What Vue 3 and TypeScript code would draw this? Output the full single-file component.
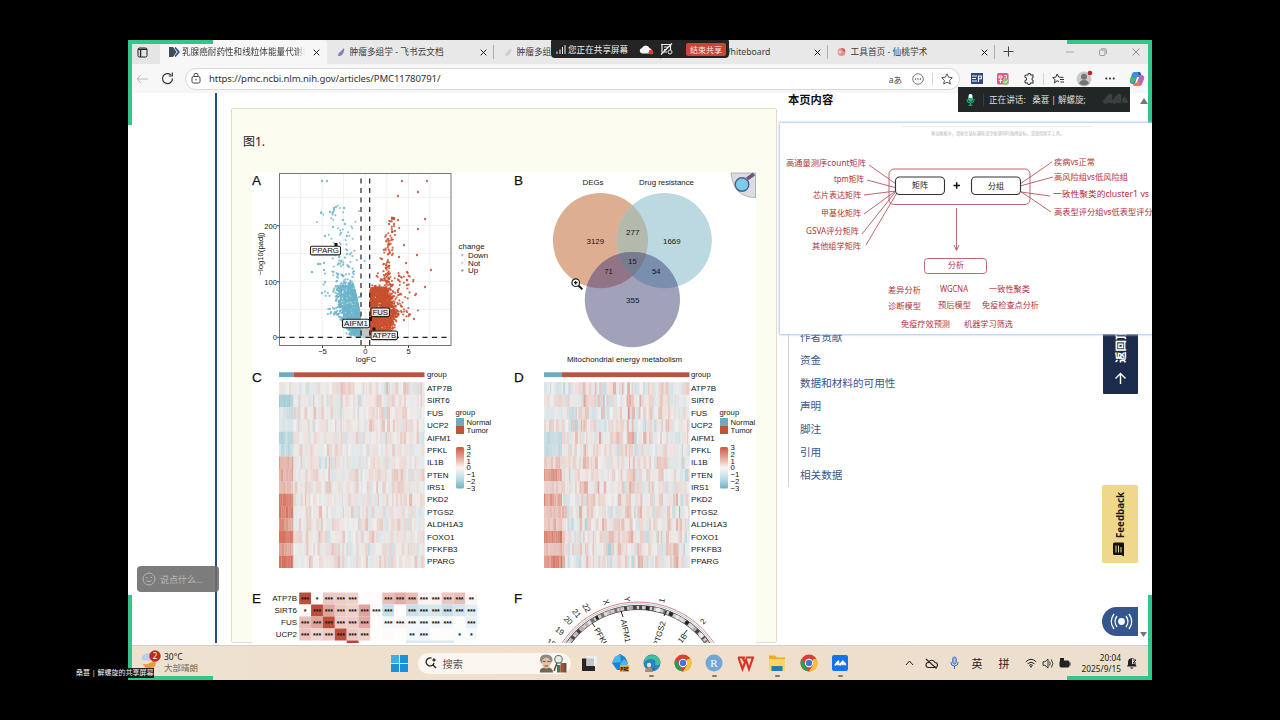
<template>
  <div class="stage">
    <div class="desktop">
      <!-- 标签栏 -->
      <div class="tabs">
        <div class="tab-menu">
          <svg width="11" height="11" viewBox="0 0 11 11"><rect x="1" y="1" width="9" height="9" rx="1.5" fill="none" stroke="#222" /><path d="M1 2.3h9M3.6 3v7" stroke="#222" stroke-width="1.3" /></svg>
        </div>
        <div v-for="(tab, i) in tabs" :key="i" class="tab" :class="{ active: tab.active, board: tab.kind === 'board' }">
          <svg class="tab-icon" width="12" height="12" viewBox="0 0 12 12">
            <template v-if="tab.kind === 'pmc'">
              <path d="M0 1h4l3.5 5L4 11H0z" fill="#454b55" />
              <path d="M6 1.5L9.8 6 6 10.5" fill="none" stroke="#274d86" stroke-width="1.7" />
            </template>
            <path v-else-if="tab.kind === 'doc'" d="M2 10C2 7 4 6 5 5l3-3c.5 2 0 5-2 7-1 1-3 1-4 1z" :fill="tab.faded ? '#cfcfd8' : '#8583bd'" />
            <template v-else-if="tab.kind === 'peach'">
              <circle cx="4.5" cy="6" r="3.9" fill="#e39089" />
              <path d="M4 2.5q4-1 4.400 3-1.500 1-4.400-3z" fill="#c9606a" />
              <circle cx="3" cy="6" r="1.7" fill="#f3c5bd" />
            </template>
          </svg>
          <span class="tab-title">{{ tab.title }}</span>
          <svg class="tab-close" width="7" height="7" viewBox="0 0 7 7"><path d="M.7.7l5.600 5.600M6.300.7L.7 6.300" stroke="#222" /></svg>
        </div>
        <svg class="new-tab" width="11" height="11" viewBox="0 0 11 11"><path d="M5.500.5v10M.5 5.500h10" stroke="#444" /></svg>
        <div class="win-controls">
          <svg width="8" height="8" viewBox="0 0 8 8"><path d="M0 4h8" stroke="#aaa" /></svg>
          <svg width="8" height="8" viewBox="0 0 8 8"><rect x=".5" y="2" width="5.500" height="5.500" rx="1" fill="none" stroke="#999" /><path d="M2 .8h4q1.300 0 1.300 1.300V6" fill="none" stroke="#999" /></svg>
          <svg width="8" height="8" viewBox="0 0 8 8"><path d="M.5.5l7 7M7.500.5l-7 7" stroke="#888" /></svg>
        </div>
      </div>

      <!-- 地址栏 -->
      <div class="toolbar">
        <svg width="12" height="10" viewBox="0 0 12 10"><path d="M12 5H1M5 1L1 5l4 4" fill="none" stroke="#bbb" /></svg>
        <svg class="reload" width="13" height="13" viewBox="0 0 13 13"><path d="M11.500 6.500A5 5 0 1 1 9.800 2.800" fill="none" stroke="#333" stroke-width="1.200" /><path d="M11.300.5v3.500H7.800" fill="none" stroke="#333" stroke-width="1.200" /></svg>
        <div class="address">
          <svg width="10" height="11" viewBox="0 0 10 11"><rect x="1" y="3.500" width="8" height="6.500" rx="1.500" fill="none" stroke="#444" /><path d="M3 3.500V2.300a2 2 0 0 1 4 0v1.200" fill="none" stroke="#444" /><circle cx="5" cy="6.800" r=".8" fill="#444" /></svg>
          <span class="url">https://pmc.ncbi.nlm.nih.gov/articles/PMC11780791/</span>
          <span class="translate">aあ</span>
          <svg width="12" height="12" viewBox="0 0 12 12"><circle cx="6" cy="6" r="5.300" fill="none" stroke="#555" stroke-width=".8" /><circle v-for="n in 3" :key="n" :cx="n * 2.400 + 1.200" cy="6" r=".7" fill="#444" /></svg>
          <i class="sep"></i>
          <svg width="12" height="12" viewBox="0 0 12 12"><path d="M6 .8l1.600 3.400 3.700.5-2.700 2.600.7 3.700L6 9.200 2.700 11l.7-3.700L.7 4.700l3.700-.5z" fill="none" stroke="#444" stroke-width=".9" /></svg>
        </div>
        <div class="extensions">
          <svg width="12" height="11" viewBox="0 0 12 11"><rect width="12" height="11" fill="#2c477b" /><path d="M1 3h5M1 5.500h4M1 8h5M7.500 9V3h2.800v2.800H7.500" fill="none" stroke="#fff" stroke-width="1.100" /></svg>
          <svg width="12" height="12" viewBox="0 0 12 12"><rect width="11.500" height="11.500" rx="1.500" fill="#df5a88" /><path d="M2 3h3v2H2zM7 2.500h2.500V5H7M2 7.500h3M3.500 6v4" fill="none" stroke="#fff" stroke-width=".9" /><circle cx="8.500" cy="8.500" r="3.200" fill="#8bc56a" /><path d="M7 8.500l1.200 1.200 2-2.200" fill="none" stroke="#fff" /></svg>
          <svg width="12" height="12" viewBox="0 0 12 12"><path d="M3 2h1.800a1.500 1.500 0 0 1 3 0H10v2.600a1.600 1.600 0 0 0 0 3V10H7.500a1.500 1.500 0 0 1-3 0H3q-1 0-1-1V7.500M2 4.500V3q0-1 1-1M2 4.300a1.600 1.600 0 0 1 0 3.200" fill="none" stroke="#333" stroke-width="1.100" /></svg>
          <i class="sep"></i>
          <svg width="13" height="12" viewBox="0 0 13 12"><path d="M7 8.500L5 7.800 2.500 10 3 6.800.8 4.500l3-.4L5.200 1l1.500 3.100 4.800.3M8 6.500h4M8.500 9h3.500" fill="none" stroke="#333" stroke-width="1" /></svg>
          <svg width="17" height="17" viewBox="0 0 17 17"><circle cx="8" cy="9" r="7.500" fill="#c9c9c9" /><circle cx="8" cy="6.800" r="3" fill="#747474" /><path d="M3 13.500Q4 10 8 10t5 3.500q-5 4-10 0z" fill="#747474" /><circle cx="14" cy="3" r="2.300" fill="#c0232c" /></svg>
          <svg width="10" height="3" viewBox="0 0 10 3"><circle v-for="n in 3" :key="n" :cx="n * 3.700 - 2.400" cy="1.500" r="1" fill="#222" /></svg>
          <svg width="16" height="16" viewBox="0 0 16 16"><path d="M5 1h5q2 0 2 3l-1 2H8L6 13H3q-3-1-2-4l2-6q.5-2 2-2z" fill="#3a8fdc" /><path d="M11 4h2q3 1 2 4l-2 5q-.7 2-3 2H6q-2 0-2-2l3-1q1 0 1.500-2z" fill="#bd62b8" /><path d="M1 8q1 5 4 3l2-4-5-1z" fill="#53b75c" /><path d="M4 13q4 0 5-3l2 1-1 4H6q-2 0-2-2z" fill="#ea7f43" /><path d="M9 1q3 0 3 3h-2z" fill="#2d47b5" /></svg>
        </div>
      </div>

      <!-- 页面内容 -->
      <div class="page">
        <div class="gutter"></div>
        <div class="article">
          <div class="figure-box">
            <div class="figure-title">图1.</div>
            <svg class="figure" width="504" height="471" viewBox="252 172 504 471">
              <rect x="252" y="172" width="504" height="471" fill="#fff" />
              <text v-for="l in panelLetters" :key="l.t" :x="l.x" :y="l.y" font-size="13.500" fill="#111" stroke="#111" stroke-width=".25">{{ l.t }}</text>

              <!-- A 火山图 -->
              <g stroke="#ebebeb" stroke-width=".8">
                <line v-for="n in 7" :key="'v' + n" :x1="278.800 + n * 21.600" :x2="278.800 + n * 21.600" y1="174" y2="345" />
                <line v-for="n in 6" :key="'h' + n" x1="280" x2="450" :y1="365.400 - n * 28" :y2="365.400 - n * 28" />
              </g>
              <circle v-for="(p, i) in volcano" :key="'p' + i" :cx="p.x" :cy="p.y" :r="p.r" :fill="p.c" fill-opacity=".85" />
              <path d="M361 345V174M369.700 345V174M280 337.300H451" fill="none" stroke="#222" stroke-width="1.200" stroke-dasharray="5 4.500" />
              <rect x="279.500" y="173.500" width="171.500" height="172" fill="none" stroke="#777" />
              <path d="M277 337.300h2.500M277 281.700h2.500M277 225.700h2.500M322.500 345.500v2.500M365.300 345.500v2.500M408.500 345.500v2.500" stroke="#444" />
              <g v-for="g in geneTags" :key="g.t">
                <rect :x="g.x" :y="g.y" :width="g.w" height="8.600" rx="1.500" fill="#fff" fill-opacity=".8" stroke="#222" stroke-width="1.100" />
                <text :x="g.x + g.w / 2" :y="g.y + 7.100" font-size="7.800" text-anchor="middle" :textLength="g.w - 3" lengthAdjust="spacingAndGlyphs">{{ g.t }}</text>
              </g>
              <path d="M334.500 243h3v3h-3zM369 317h3v4h-3zM372.500 327.500h3v3h-3z" fill="#111" />
              <g font-size="7.600" text-anchor="end">
                <text x="277" y="340.200">0</text>
                <text x="277" y="284.500">100</text>
                <text x="277" y="228.500">200</text>
              </g>
              <g font-size="7.600" text-anchor="middle">
                <text x="322.500" y="354">−5</text>
                <text x="365.300" y="354">0</text>
                <text x="408.500" y="354">5</text>
                <text x="366" y="361.500">logFC</text>
                <text transform="translate(262.500 254) rotate(-90)" textLength="43">−log10(padj)</text>
              </g>
              <text x="458.500" y="248.500" font-size="7.800" textLength="26">change</text>
              <g v-for="(k, i) in legendKeys" :key="k.t">
                <circle cx="462.300" :cy="255 + i * 7.700" r="1.200" :fill="k.c" />
                <text x="468" :y="257.800 + i * 7.700" font-size="7.900">{{ k.t }}</text>
              </g>

              <!-- B 韦恩图 -->
              <defs>
                <clipPath id="clip-a"><circle cx="600.500" cy="240.600" r="47.600" /></clipPath>
                <clipPath id="clip-b"><circle cx="664.300" cy="240.600" r="47.600" /></clipPath>
                <linearGradient id="scale-c" x2="0" y2="1">
                  <stop offset="0" stop-color="#cb5743" />
                  <stop offset=".25" stop-color="#e3a393" />
                  <stop offset=".5" stop-color="#faf5f3" />
                  <stop offset=".78" stop-color="#b7dbe3" />
                  <stop offset="1" stop-color="#6eb1c4" />
                </linearGradient>
              </defs>
              <circle cx="600.500" cy="240.600" r="47.600" fill="#deae91" />
              <circle cx="664.300" cy="240.600" r="47.600" fill="#bcd8e0" />
              <g clip-path="url(#clip-a)"><circle cx="664.300" cy="240.600" r="47.600" fill="#b3b9ab" /></g>
              <circle cx="632.400" cy="299.600" r="47.600" fill="#a1a1b9" />
              <g clip-path="url(#clip-a)"><circle cx="632.400" cy="299.600" r="47.600" fill="#937487" /></g>
              <g clip-path="url(#clip-b)">
                <circle cx="632.400" cy="299.600" r="47.600" fill="#7a8eae" />
                <g clip-path="url(#clip-a)"><path d="M632.400 252a47.600 47.600 0 0 1 16 2.600V300h-32v-45.400a47.600 47.600 0 0 1 16-2.600z" fill="#777c91" /></g>
              </g>
              <g font-size="7.800" text-anchor="middle">
                <text v-for="v in vennTexts" :key="v.t" :x="v.x" :y="v.y" :textLength="v.w" lengthAdjust="spacingAndGlyphs">{{ v.t }}</text>
              </g>
              <path d="M731 173h24.500v24.500q-22 0-24.500-24.500z" fill="#dcdde2" stroke="#999" stroke-width=".7" />
              <path d="M747 179l7-5" stroke="#6f5480" stroke-width="3.500" />
              <circle cx="742" cy="184.500" r="6.800" fill="#7ccdea" stroke="#4d5c93" stroke-width="1.400" />

              <!-- C / D 热图 -->
              <g v-for="h in heatmaps" :key="h.x">
                <rect :x="h.x" y="372.300" :width="h.normal" height="4.800" fill="#6bacc0" />
                <rect :x="h.x + h.normal" y="372.300" :width="145.500 - h.normal" height="4.800" fill="#bd533f" />
                <rect :x="h.x" y="382.300" width="145.500" height="185.700" fill="#ebe5e3" />
                <rect v-for="(c, i) in h.cells" :key="i" :x="c.x" :y="c.y" :width="c.w" height="12.400" :fill="c.c" />
                <text :x="h.label" y="377.300" font-size="7.700">group</text>
                <text v-for="(g, i) in genes" :key="g" :x="h.label" :y="391 + i * 12.380" font-size="8.100">{{ g }}</text>
                <text :x="h.label + 28.500" y="414.500" font-size="7.700">group</text>
                <rect :x="h.label + 29" y="418" width="8" height="8" fill="#6bacc0" />
                <rect :x="h.label + 29" y="426" width="8" height="8" fill="#bd533f" />
                <text :x="h.label + 39.500" y="424.500" font-size="7.700">Normal</text>
                <text :x="h.label + 39.500" y="432.500" font-size="7.700">Tumor</text>
                <rect :x="h.label + 29" y="447" width="8" height="41.500" rx="1.500" fill="url(#scale-c)" />
                <text v-for="n in 7" :key="n" :x="h.label + 39.500" :y="442.800 + n * 6.900" font-size="7.800">{{ 4 - n < 0 ? '−' + (n - 4) : 4 - n }}</text>
              </g>

              <!-- E 相关性矩阵 -->
              <g v-for="(row, r) in corr" :key="row.name">
                <rect v-for="(v, c) in row.vals" :key="c" :x="299.200 + c * 11.870" :y="592.500 + r * 12" width="11.900" height="12" :fill="corrColor(v)" />
                <text x="297" :y="601.200 + r * 12" font-size="8" text-anchor="end">{{ row.name }}</text>
                <text v-for="(s, c) in row.stars" :key="'s' + c" :x="305.200 + c * 11.870" :y="602 + r * 12" font-size="7" font-weight="bold" text-anchor="middle">{{ '*'.repeat(s) }}</text>
              </g>
              <rect x="346.700" y="640.500" width="11.900" height="3" fill="#b8432f" />
              <rect x="406" y="640.500" width="48" height="3" fill="#dbe9ee" />

              <!-- F 染色体圈图 -->
              <circle cx="638" cy="693" r="91" fill="none" stroke="#c96a6a" stroke-width=".8" />
              <circle cx="638" cy="693" r="89.300" fill="none" stroke="#999" stroke-width=".6" />
              <circle cx="638" cy="693" r="85.500" fill="none" stroke="#333" stroke-width="5" />
              <circle cx="638" cy="693" r="85.500" fill="none" stroke="#d3cfd1" stroke-width="3.600" />
              <path v-for="(b, i) in bands" :key="i" :d="b.d" fill="none" :stroke="b.c" stroke-width="3.800" />
              <path d="M592 623l3 4M621 611l2 6M664 616l2-5M684 634l3-4" stroke="#222" stroke-width="1" />
              <text v-for="l in ringLabels" :key="l.t" :transform="`translate(${l.x} ${l.y}) rotate(${l.a})`" font-size="7.900" text-anchor="middle" dominant-baseline="central">{{ l.t }}</text>
            </svg>
          </div>
        </div>
        <div class="aside">
          <div class="aside-title">本页内容</div>
          <div class="toc">
            <a v-for="t in toc" :key="t">{{ t }}</a>
          </div>
        </div>
        <svg class="scroll-up" width="8" height="6" viewBox="0 0 8 6"><path d="M4 0l4 6H0z" fill="#777" /></svg>
        <svg class="scroll-down" width="7" height="5" viewBox="0 0 7 5"><path d="M0 0h7L3.500 5z" fill="#777" /></svg>
        <svg class="to-top" width="35" height="80" viewBox="0 0 35 80">
          <rect width="35" height="80" rx="1" fill="#1b2b4b" />
          <text transform="translate(22 49) rotate(-90)" font-size="11.500" font-weight="bold" fill="#fff">返回顶部</text>
          <path d="M17.500 70V60M12.500 64.500l5-5 5 5" fill="none" stroke="#fff" stroke-width="1.400" />
        </svg>
        <svg class="feedback" width="36" height="78" viewBox="0 0 36 78">
          <rect width="36" height="78" rx="1.500" fill="#efd88b" />
          <text transform="translate(21.500 53) rotate(-90)" font-size="11" font-weight="bold" fill="#1b1b1b" textLength="46" lengthAdjust="spacingAndGlyphs">Feedback</text>
          <path d="M11 59q0-1.500 1.500-1.500H21q1 0 1 1v13l-2.500-1.500h-7Q11 70 11 68.500z" fill="#111" />
          <path d="M14 60.500v7M16.500 60.500v7M19 62v5.500" stroke="#efd88b" stroke-width="1" />
        </svg>
        <svg class="radio" width="36" height="29" viewBox="0 0 36 29">
          <path d="M36 0H14.500a14.500 14.500 0 0 0 0 29H36z" fill="#33568c" />
          <circle cx="19.500" cy="14.500" r="3.400" fill="#fff" />
          <path d="M15 9q-4 5.500 0 11M24 9q4 5.500 0 11M12 7q-5.500 7.500 0 15M27 7q5.500 7.500 0 15" fill="none" stroke="#fff" stroke-width="1.300" />
        </svg>
      </div>

      <!-- 任务栏 -->
      <div class="taskbar">
        <div class="weather">
          <svg width="20" height="20" viewBox="0 0 20 20">
            <path d="M1.500 14q7 1 11.500-4 4 4-1 8-6 3-10.500-4z" fill="#f29a38" />
            <path d="M2 10.500a3 3 0 0 1 1-5.500 4 4 0 0 1 7 0v5.500z" fill="#b9cdf2" />
            <circle cx="14" cy="6" r="5.700" fill="#bd2823" />
            <text x="14" y="9" font-size="8" fill="#fff" text-anchor="middle">2</text>
          </svg>
          <div class="weather-text">
            <span>30°C</span>
            <span class="muted">大部晴朗</span>
          </div>
        </div>
        <div class="apps">
          <svg class="start" width="17" height="17" viewBox="0 0 17 17"><path d="M0 0h8v8H0zM9 0h8v8H9zM0 9h8v8H0zM9 9h8v8H9z" fill="#1a8fdb" /><path d="M0 0h8v8H0z" fill="#35b0ea" /></svg>
          <div class="search">
            <svg width="12" height="12" viewBox="0 0 12 12"><path d="M6.500 1.200A4 4 0 1 0 9 6M8 8l3 3" fill="none" stroke="#222" stroke-width="1.300" /><path d="M9 .5l.7 1.800 1.800.7-1.800.7L9 5.500l-.7-1.800L6.500 3l1.800-.7z" fill="#222" /></svg>
            <span>搜索</span>
            <svg class="doodle" width="31" height="21" viewBox="0 0 31 21">
              <path d="M2 19.500q-1-4 4-5h5q4 1 4 5z" fill="#716556" />
              <path d="M2 8q-1-6.500 6-6.500T14.500 8L12 11H4z" fill="#8d8b86" />
              <ellipse cx="8.300" cy="10" rx="4.300" ry="5.500" fill="#e4bfa0" />
              <path d="M5 8.500h2.500M9.500 8.500H12M6.500 13h3.500" stroke="#5b4635" stroke-width=".9" />
              <path d="M19 10l-3 8" stroke="#5d4a30" stroke-width="1.500" />
              <path d="M19 12h3.500v7.500H19z" fill="#42785a" />
              <path d="M22.500 10H26v9.500h-3.500z" fill="#b4482f" />
              <path d="M26 10h2.500v9.500H26z" fill="#6c5135" />
              <circle cx="20.500" cy="6.300" r="3.800" fill="#e5efe8" stroke="#52756a" stroke-width="1.100" />
            </svg>
          </div>
          <div v-for="a in apps" :key="a.id" class="app" :class="{ running: a.running }">
            <svg width="18" height="18" viewBox="0 0 18 18">
              <template v-if="a.id === 'taskview'"><path d="M6 2h11v11H6z" fill="#eee" /><path d="M2 4.500h4.500V12H15v5H2z" fill="#262626" /><path d="M6.500 4.500H14V12H6.500z" fill="#c5c5c5" /></template>
              <template v-else-if="a.id === 'files-pre'"><path d="M9 0l5 3 3 6-4 7H6L1 9l3-6z" fill="#1e83cf" /><path d="M9 0l1 8-9 1 3-6zM13 5l4 4-4 7-4-6z" fill="#49b6ec" /><rect x="9" y="11" width="9" height="7" fill="#e6a93c" /><text x="13.500" y="16.500" font-size="4.500" font-weight="bold" text-anchor="middle">PRE</text></template>
              <template v-else-if="a.id === 'edge'"><circle cx="9" cy="9" r="8.500" fill="#2385ca" /><path d="M1 8a8.500 8.500 0 0 1 16.300-1Q18 12 12 11q2-6-4-6-5 0-7 4z" fill="#45bf9b" /><path d="M5 9q0 5 7 6-4 4-9 0z" fill="#145399" /><circle cx="6" cy="11" r="2.200" fill="#f0e0d2" /><path d="M2 18q0-5 4-5t4 5z" fill="#a28b80" /></template>
              <template v-else-if="a.id.startsWith('chrome')"><circle cx="9" cy="9" r="8.500" fill="#d9402f" /><path d="M1.600 4.800L9 17.500A8.500 8.500 0 0 1 1.600 4.800z" fill="#2f9c50" /><path d="M9 17.500l4-6.500V5h3.600A8.500 8.500 0 0 1 9 17.500z" fill="#f5c33b" /><circle cx="9" cy="9" r="4.200" fill="#fff" /><circle cx="9" cy="9" r="3.200" fill="#3b78dc" /></template>
              <template v-else-if="a.id === 'rstudio'"><circle cx="9" cy="9" r="8.500" fill="#72a5d8" /><text x="9" y="13" font-size="11" class="serif" fill="#fff" text-anchor="middle">R</text></template>
              <path v-else-if="a.id === 'wps'" d="M1 3.500h7M1.500 3.500L5.500 15 9 6l3 9 4-11.500M9 3.500h8M5.500 3.500l2 4" fill="none" stroke="#da3429" stroke-width="2.200" />
              <template v-else-if="a.id === 'folder'"><path d="M1 1.500h6l2 2h8V16H1z" fill="#e7ab28" /><path d="M1 5h16v12H1z" fill="#fbd562" /><path d="M3.500 12h11v5h-11z" fill="#2979b9" /></template>
              <template v-else><rect x="1" y="1" width="16" height="16" rx="2" fill="#1573ec" /><path d="M4 11.300l3.300-4v4M8.500 11.300l3.300-4v4M13 8.500q1.300 1 1.300 2.800" fill="none" stroke="#fff" stroke-width="2" stroke-linejoin="round" /></template>
            </svg>
          </div>
        </div>
        <div class="tray">
          <svg width="9" height="6" viewBox="0 0 9 6"><path d="M1 5l3.500-4L8 5" fill="none" stroke="#222" /></svg>
          <svg width="13" height="11" viewBox="0 0 13 11"><path d="M3.500 9.500a2.500 2.500 0 0 1 0-5 3.500 3.500 0 0 1 6.500 0 2.500 2.500 0 0 1 0 5zM1 1l10.500 9.500" fill="none" stroke="#222" stroke-width="1.100" /></svg>
          <svg width="9" height="14" viewBox="0 0 9 14"><rect x="2.700" y="1" width="3.600" height="7" rx="1.800" fill="#9db9e6" stroke="#3967b3" stroke-width=".9" /><path d="M.8 6q0 4 3.700 4t3.700-4M4.500 10v3" fill="none" stroke="#3967b3" /></svg>
          <span>英</span>
          <span>拼</span>
          <svg width="12" height="10" viewBox="0 0 12 10"><path d="M.8 3.800q5.200-5 10.400 0M2.600 5.700q3.400-3 6.800 0M4.200 7.400q1.800-1.500 3.600 0" fill="none" stroke="#222" /><circle cx="6" cy="8.700" r=".9" fill="#222" /></svg>
          <svg width="12" height="11" viewBox="0 0 12 11"><path d="M1 3.800h2L6 1v9L3 7.300H1zM7.500 3.500q1.500 2 0 4M9.300 1.500q3 4 0 8" fill="none" stroke="#222" stroke-width=".9" /></svg>
          <svg width="12" height="11" viewBox="0 0 12 11"><rect x="1" y="3" width="9" height="6" rx="1" fill="#222" stroke="#222" /><path d="M10.500 4.500h1v3h-1zM1 0h4v5H1z" fill="#222" /></svg>
          <div class="clock"><span>20:04</span><span>2025/9/15</span></div>
          <svg width="12" height="13" viewBox="0 0 12 13"><path d="M1 9.500l1-2V5a3.800 3.800 0 0 1 7.600 0v2.500l1 2zM4 10.500h3.600q-1.800 2.500-3.600 0z" fill="#222" /><path d="M6 2h5v5H6z" fill="#eddfce" /><path d="M7 3h3L7 6h3" fill="none" stroke="#222" /></svg>
        </div>
      </div>

      <i class="corner tl"></i>
      <i class="corner tr"></i>
      <i class="corner bl"></i>
      <i class="corner br"></i>
    </div>

    <!-- 会议浮层 -->
    <div class="share-bar">
      <svg width="10" height="9" viewBox="0 0 10 9"><path d="M1 9V6.500M4 9V4.500M6.500 9V2M9 9V0" stroke="#eee" /></svg>
      <span>您正在共享屏幕</span>
      <svg class="cloud" width="15" height="11" viewBox="0 0 15 11"><path d="M3 9.500a2.800 2.800 0 0 1 0-5.500 4 4 0 0 1 7.500 0 2.800 2.800 0 0 1 0 5.500z" fill="#f4f4f4" /><circle cx="12" cy="8.200" r="2.400" fill="#dd4033" /></svg>
      <svg width="13" height="12" viewBox="0 0 13 12"><path d="M1 1.500h10M2 1v8h5M4 4h5M4 6.500h3M1 11.500L12 .5M10.500 2v5" fill="none" stroke="#eee" stroke-width="1.200" /><circle cx="10" cy="9" r="2" fill="none" stroke="#eee" /></svg>
      <b>结束共享</b>
    </div>

    <div class="speaking">
      <svg width="9" height="12" viewBox="0 0 9 12"><rect x="2.500" y="0" width="4" height="7.500" rx="2" fill="#fff" /><path d="M2.500 4h4v1.500a2 2 0 0 1-4 0z" fill="#25b67c" /><path d="M.8 5q0 4 3.700 4t3.700-4M4.500 9v2M2.500 11.300h4" fill="none" stroke="#2fb983" /></svg>
      <i></i>
      <span>正在讲话:</span>
      <span>桑葚 | 解螺旋;</span>
      <svg class="wm" width="27" height="17" viewBox="0 0 27 17"><path d="M3 12l6-7v7M12 12l6-7v7M22 7q2.500 2 2.500 5" fill="none" stroke="#3c4040" stroke-width="4.500" stroke-linejoin="round" /></svg>
    </div>

    <div class="board">
      <svg width="372" height="211" viewBox="780 123 372 211">
        <path d="M902 126.500H1093" stroke="#eee" />
        <text x="931" y="135" font-size="4.800" fill="#b5b5b5" textLength="133" lengthAdjust="spacingAndGlyphs">移动画板中，请按住鼠标滚轮或空格键同时拖拽鼠标，或使用抓手工具。</text>
        <g fill="none" stroke="#b6575c" stroke-width=".9">
          <path d="M869 165L896 184M867 180l28 7.500M864 195l32-4M864 214l33-24M862 234l35-44M866 245l32-54" />
          <path d="M1052 162l-32 22M1053 177l-33 9M1050 196l-29-4M1051 212l-31-21" />
          <rect x="889" y="169" width="141" height="35.500" rx="5" />
          <rect x="924.500" y="258.500" width="62" height="15" rx="3" />
          <path d="M956.500 208v42M954 245l2.500 5.500 2.500-5.500" />
        </g>
        <g fill="#fff" stroke="#333" stroke-width="1.100">
          <rect x="895.500" y="177" width="49" height="17.500" rx="4" />
          <rect x="971.500" y="177" width="49" height="17.500" rx="4" />
        </g>
        <path d="M953.500 185.500h6.500M956.700 182.200v6.600" stroke="#111" stroke-width="1.500" />
        <text v-for="b in boardTexts" :key="b.t" :x="b.x" :y="b.y + 2.900" :fill="b.dark ? '#222' : '#b3303a'" :textLength="b.w" lengthAdjust="spacingAndGlyphs" font-size="8">{{ b.t }}</text>
      </svg>
    </div>

    <div class="say">
      <svg width="14" height="14" viewBox="0 0 14 14"><circle cx="7" cy="7" r="6" fill="none" stroke="#b5b5b5" /><path d="M4 5.500h1.500M8.500 5.500H10M4.500 8.500q2.500 2.500 5 0" fill="none" stroke="#b5b5b5" /></svg>
      <span>说点什么...</span>
    </div>
    <div class="caption">桑葚 | 解螺旋的共享屏幕</div>

    <svg class="cursor" width="12" height="12" viewBox="0 0 12 12"><circle cx="4.700" cy="4.700" r="3.800" fill="#fff" stroke="#222" stroke-width="1.200" /><path d="M7.500 7.500l3.800 3.800" stroke="#111" stroke-width="1.900" /><path d="M3 4.700h3.400M4.700 3v3.400" stroke="#111" stroke-width="1.200" /></svg>
  </div>
</template>

<script setup lang="ts">
interface Dot { x: number; y: number; r: number; c: string }
interface Cell { x: number; y: number; w: number; c: string }
interface Label { t: string; x: number; y: number; w?: number; a?: number; dark?: boolean }

const tabs = [
  { title: '乳腺癌耐药性和线粒体能量代谢相', kind: 'pmc', active: true },
  { title: '肿瘤多组学 - 飞书云文档', kind: 'doc' },
  { title: '肿瘤多组', kind: 'doc', faded: true },
  { title: 'Whiteboard', kind: 'board' },
  { title: '工具首页 - 仙桃学术', kind: 'peach' }
]

const toc = ['作者贡献', '资金', '数据和材料的可用性', '声明', '脚注', '引用', '相关数据']

const apps = [
  { id: 'taskview' },
  { id: 'files-pre' },
  { id: 'edge', running: true },
  { id: 'chrome-1' },
  { id: 'rstudio', running: true },
  { id: 'wps' },
  { id: 'folder', running: true },
  { id: 'chrome-2' },
  { id: 'meeting', running: true }
]

const panelLetters: Label[] = [
  { t: 'A', x: 252, y: 184.5 },
  { t: 'B', x: 514, y: 184.5 },
  { t: 'C', x: 252, y: 381.5 },
  { t: 'D', x: 514, y: 381.5 },
  { t: 'E', x: 252, y: 603 },
  { t: 'F', x: 514, y: 603 }
]

const geneTags = [
  { t: 'PPARG', x: 310.5, y: 246.3, w: 30 },
  { t: 'FUS', x: 371, y: 308, w: 18.5 },
  { t: 'AIFM1', x: 342.5, y: 319.2, w: 27 },
  { t: 'ATP7B', x: 371, y: 331, w: 26.5 }
]

const legendKeys = [
  { t: 'Down', c: '#a9c3cc' },
  { t: 'Not', c: '#d5d5d5' },
  { t: 'Up', c: '#c08878' }
]

const vennTexts: Label[] = [
  { t: 'DEGs', x: 593, y: 184.5, w: 21 },
  { t: 'Drug resistance', x: 666.5, y: 184.5, w: 55 },
  { t: '3129', x: 595.3, y: 244, w: 17.5 },
  { t: '277', x: 632.8, y: 235.3, w: 13.5 },
  { t: '1669', x: 671.8, y: 244, w: 17.5 },
  { t: '15', x: 632.5, y: 264, w: 8.5 },
  { t: '71', x: 608.5, y: 273.5, w: 8.5 },
  { t: '54', x: 656.3, y: 273.5, w: 8.5 },
  { t: '355', x: 632.8, y: 303, w: 13.5 },
  { t: 'Mitochondrial energy metabolism', x: 624.6, y: 362.3, w: 115 }
]

const boardTexts: Label[] = [
  { t: '高通量测序count矩阵', x: 786, y: 163, w: 80 },
  { t: 'tpm矩阵', x: 834, y: 179, w: 30 },
  { t: '芯片表达矩阵', x: 813, y: 195, w: 48 },
  { t: '甲基化矩阵', x: 821, y: 213, w: 40 },
  { t: 'GSVA评分矩阵', x: 806, y: 231, w: 53 },
  { t: '其他组学矩阵', x: 812, y: 246, w: 49 },
  { t: '矩阵', x: 912, y: 185.5, w: 16, dark: true },
  { t: '分组', x: 988, y: 186, w: 16, dark: true },
  { t: '疾病vs正常', x: 1054, y: 162.5, w: 41 },
  { t: '高风险组vs低风险组', x: 1054, y: 177, w: 74 },
  { t: '一致性聚类的cluster1 vs', x: 1053, y: 194, w: 96 },
  { t: '高表型评分组vs低表型评分组', x: 1054, y: 212, w: 107 },
  { t: '分析', x: 948, y: 265.5, w: 16 },
  { t: '差异分析', x: 888, y: 290, w: 33 },
  { t: 'WGCNA', x: 940, y: 289.5, w: 28 },
  { t: '一致性聚类', x: 989, y: 289, w: 41 },
  { t: '诊断模型', x: 888, y: 306, w: 33 },
  { t: '预后模型', x: 938, y: 305, w: 33 },
  { t: '免疫检查点分析', x: 982, y: 305, w: 57 },
  { t: '免疫疗效预测', x: 901, y: 324, w: 49 },
  { t: '机器学习筛选', x: 964, y: 324, w: 49 }
]

// 固定种子的随机数
const seeded = (seed: number) => () => {
  seed = (seed + 0x6d2b79f5) | 0
  let t = Math.imul(seed ^ (seed >>> 15), 1 | seed)
  t = (t + Math.imul(t ^ (t >>> 7), 61 | t)) ^ t
  return ((t ^ (t >>> 14)) >>> 0) / 4294967296
}

const gauss = (rnd: () => number) => rnd() + rnd() + rnd() + rnd() - 2

// 火山图散点
const buildVolcano = (): Dot[] => {
  const rnd = seeded(21)
  const blue = '#6db4ca'
  const red = '#c9502f'
  const dots: Dot[] = []
  for (let i = 0; i < 90; i++) {
    dots.push({ x: 361.5 + rnd() * 8, y: 337 - rnd() * 9, r: 1.1, c: '#c4c4c4' })
  }
  for (let i = 0; i < 950; i++) {
    const h = Math.pow(rnd(), 1.3) * 48 + Math.abs(gauss(rnd)) * 8
    const width = Math.min(19, 8 + h * 0.6) + gauss(rnd) * 4
    const right = 361 - Math.pow(h / 50, 2) * 7
    dots.push({ x: right - Math.pow(rnd(), 1.4) * width, y: 337 - h, r: 1.1, c: blue })
  }
  for (let i = 0; i < 150; i++) {
    const h = 22 + Math.pow(rnd(), 1.3) * 65
    dots.push({ x: 343 + gauss(rnd) * 13, y: 337 - h, r: 1.1, c: blue })
  }
  for (let i = 0; i < 35; i++) {
    dots.push({ x: 340 + gauss(rnd) * 16, y: 265 - rnd() * 60, r: 1, c: blue })
  }
  for (let i = 0; i < 1400; i++) {
    const h = Math.pow(rnd(), 0.95) * 48 + Math.abs(gauss(rnd)) * 3
    const width = 18 + Math.sin((h / 50) * Math.PI) * 8 - h * 0.06 + gauss(rnd) * 3
    dots.push({ x: 370.5 + Math.pow(rnd(), 1.2) * width, y: 337 - h, r: 1.1, c: red })
  }
  for (let i = 0; i < 110; i++) {
    const h = 45 + Math.pow(rnd(), 1.2) * 75
    dots.push({ x: 380 + h * 0.11 + gauss(rnd) * 5, y: 337 - h, r: 1.1, c: red })
  }
  for (let i = 0; i < 140; i++) {
    const h = 20 + Math.pow(rnd(), 1.2) * 44
    dots.push({ x: 396 + gauss(rnd) * 14, y: 337 - h, r: 1.1, c: red })
  }
  const farBlue = [[322, 181], [327, 181], [321, 213], [330, 212], [334, 208], [336, 207], [344, 208], [343, 220], [333, 227], [345, 224], [347, 236], [325, 236], [341, 233], [347, 254], [320, 264], [312, 272], [318, 264], [324, 263], [324, 270], [325, 282], [322, 293], [330, 309], [333, 212], [334, 210]]
  const farRed = [[402, 181], [427, 181], [418, 192], [398, 196], [425, 219], [418, 229], [392, 219], [394, 219], [398, 220], [389, 224], [394, 224], [392, 232], [395, 231], [404, 245], [417, 255], [431, 270], [406, 263], [399, 257], [407, 272], [407, 280], [407, 285], [425, 287], [416, 294], [414, 319], [399, 276], [382, 259], [404, 320]]
  farBlue.forEach(([x, y]) => dots.push({ x, y, r: 1.2, c: blue }))
  farRed.forEach(([x, y]) => dots.push({ x, y, r: 1.2, c: red }))
  return dots
}

const mix = (a: number[], b: number[], t: number) =>
  `rgb(${a.map((v, i) => Math.round(v + (b[i] - v) * t)).join(',')})`

const heatColor = (v: number) => {
  const t = Math.min(1, Math.abs(v))
  return v > 0 ? mix([240, 234, 232], [211, 100, 78], t) : mix([240, 239, 239], [112, 180, 198], t)
}

const genes = ['ATP7B', 'SIRT6', 'FUS', 'UCP2', 'AIFM1', 'PFKL', 'IL1B', 'PTEN', 'IRS1', 'PKD2', 'PTGS2', 'ALDH1A3', 'FOXO1', 'PFKFB3', 'PPARG']

// 相邻几行共用列趋势，每个格子宽度不等
const buildHeat = (x0: number, normal: number, base: number[], noise: number, seed: number): Cell[] => {
  const rnd = seeded(seed)
  const cells: Cell[] = []
  const trends = [0, 1, 2].map(() => Array.from({ length: 150 }, () => gauss(rnd) * noise))
  base.forEach((b, r) => {
    const trend = trends[Math.floor(r / 5)]
    let x = 0
    while (x < 145.5) {
      const limit = x < normal ? normal : 145.5
      const w = Math.min(limit - x, 0.9 + rnd() * 2.6)
      const v = x < normal
        ? b + gauss(rnd) * 0.16
        : 0.03 + trend[Math.floor(x)] + gauss(rnd) * noise * 0.8
      cells.push({ x: x0 + x, y: 382.3 + r * 12.38, w, c: heatColor(v) })
      x += Math.max(w, 0.1)
    }
  })
  return cells
}

const baseC = [-0.12, -0.5, -0.3, -0.15, -0.45, -0.35, 0.4, 0.45, 0.3, 0.75, 0.8, 0.7, 0.85, 0.55, 0.9]
const baseD = [-0.12, 0.05, -0.1, 0.05, -0.4, -0.3, 0.2, 0.6, 0.25, 0.5, 0.25, 0.3, 0.75, 0.3, 0.75]

const heatmaps = [
  { x: 279, label: 427, normal: 14.5, cells: buildHeat(279, 14.5, baseC, 0.19, 5) },
  { x: 544, label: 691, normal: 18, cells: buildHeat(544, 18, baseD, 0.28, 77) }
]

const volcano = buildVolcano()

const corr = [
  { name: 'ATP7B', vals: [1, 0, .3, .28, .25, 0, 0, .35, .45, .35, .05, .06, .3, .35, .04], stars: [3, 1, 3, 3, 3, 0, 0, 3, 3, 3, 3, 3, 3, 3, 2] },
  { name: 'SIRT6', vals: [0, 1, .5, .3, .25, .5, .02, -.4, 0, -.38, -.3, -.3, -.4, -.3, -.2], stars: [1, 3, 3, 3, 3, 3, 3, 3, 0, 3, 3, 3, 3, 3, 3] },
  { name: 'FUS', vals: [.35, .5, 1, .28, .28, .48, 0, -.05, .04, -.06, -.05, -.06, -.05, 0, -.15], stars: [3, 3, 3, 3, 3, 3, 0, 3, 3, 3, 3, 3, 3, 0, 3] },
  { name: 'UCP2', vals: [.32, .22, .28, 1, .3, .25, 0, .01, 0, -.05, -.08, 0, 0, -.02, -.04], stars: [3, 3, 3, 3, 3, 3, 0, 0, 0, 2, 3, 0, 0, 1, 1] }
]

const corrColor = (v: number) =>
  v >= 0 ? mix([255, 252, 251], [190, 78, 60], v) : mix([250, 252, 253], [125, 178, 200], -v)

// 圈图条带
const arc = (a1: number, a2: number) => {
  const p = (a: number) => {
    const rad = (a * Math.PI) / 180
    return `${638 + 85.5 * Math.sin(rad)} ${693 - 85.5 * Math.cos(rad)}`
  }
  return `M${p(a1)}A85.5 85.5 0 0 1 ${p(a2)}`
}

const bands = (() => {
  const rnd = seeded(9)
  const colors = ['#222', '#777', '#ddd', '#b9a3ae', '#444', '#eee', '#c9a7a7']
  const out: { d: string; c: string }[] = []
  let a = -58
  while (a < 60) {
    const w = 0.8 + rnd() * 2
    out.push({ d: arc(a, a + w), c: colors[Math.floor(rnd() * colors.length)] })
    a += w + rnd() * 2.5
  }
  return out
})()

const ringLabels: Label[] = [
  { t: '18', x: 551, y: 643, a: 30 },
  { t: '19', x: 559.5, y: 631, a: 38 },
  { t: '20', x: 568, y: 620.5, a: 45 },
  { t: '21', x: 576.5, y: 613.5, a: 52 },
  { t: '22', x: 586.5, y: 608, a: 59 },
  { t: 'X', x: 606, y: 602, a: 70 },
  { t: 'Y', x: 627, y: 599, a: 84 },
  { t: '1', x: 662, y: 600.5, a: -76 },
  { t: '2', x: 703, y: 621.5, a: -48 },
  { t: 'PFKL', x: 601, y: 637, a: 60 },
  { t: 'AIFM1', x: 625.5, y: 631, a: 79 },
  { t: 'PTGS2', x: 659.5, y: 634, a: -73 },
  { t: 'IL1B', x: 680.5, y: 641, a: -52 }
]
</script>

<style>
body {
  background: #000;
  overflow: hidden;
}
</style>

<style scoped>
.stage {
  position: relative;
  box-sizing: border-box;
  width: 1280px;
  height: 720px;
  padding: 40px 128px;
  background: #000;
  font-family: 'Noto Sans', 'Noto Sans CJK SC', sans-serif;
  overflow: hidden;
}

svg {
  display: block;
  flex: none;
}

.desktop {
  position: relative;
  display: flex;
  flex-direction: column;
  width: 1024px;
  height: 640px;
  background: #fff;
  overflow: hidden;
}

.tabs {
  display: flex;
  height: 24px;
  background: #e8e8e8;
}

.tab-menu {
  display: flex;
  align-items: center;
  width: 23px;
  padding-left: 9px;
  background: #e5e5e5;
}

.tab {
  display: flex;
  align-items: center;
  box-sizing: border-box;
  width: 167px;
  padding: 0 7.5px 0 9px;
  background: linear-gradient(#b0b0b0, #b0b0b0) right center / 1px 14px no-repeat;
}

.tab.active {
  background: #f7f7f7;
  border-radius: 4px 4px 0 0;
}

.tab-title {
  flex: 1;
  width: 0;
  margin: 0 7px 0 1.5px;
  font-size: 8.7px;
  line-height: 14px;
  color: #3c3c3c;
  white-space: nowrap;
  overflow: hidden;
}

.tab.active .tab-title {
  margin: 0 8px 0 1px;
  font-size: 8.6px;
  mask-image: linear-gradient(90deg, #000 92%, transparent);
}

.tab.board .tab-title {
  padding-left: 39px;
}

.new-tab {
  margin: 6px 0 0 8px;
}

.win-controls {
  display: flex;
  align-items: center;
  gap: 25px;
  margin-left: auto;
  padding-right: 12px;
}

.toolbar {
  display: flex;
  align-items: center;
  height: 29px;
  padding-left: 8px;
  background: #f7f7f7;
}

.reload {
  margin: 0 11px 0 13px;
}

.address {
  display: flex;
  align-items: center;
  box-sizing: border-box;
  width: 775px;
  height: 22px;
  padding: 0 6px 0 5px;
  border: 1px solid #d8d8d8;
  border-radius: 11px;
  background: #fff;
}

.url {
  flex: 1;
  margin-left: 8px;
  font-size: 9.6px;
  letter-spacing: -0.12px;
  color: #333;
}

.translate {
  margin-right: 10px;
  font-size: 8.5px;
  color: #444;
}

.sep {
  width: 1px;
  height: 12px;
  margin: 0 8px;
  background: #d5d5d5;
}

.extensions {
  display: grid;
  grid-template-columns: 25.5px 26px 25.5px 4px 26px 26px 25px 28px;
  align-items: center;
  justify-items: center;
  margin-left: 4.5px;
}

.extensions .sep {
  margin: 0;
}

.page {
  position: relative;
  display: flex;
  height: 550px;
  background: #fff;
  overflow: hidden;
}

.gutter {
  box-sizing: border-box;
  width: 88.5px;
  border-right: 2px solid #244c86;
}

.article {
  padding: 15px 0 0 14.5px;
}

.figure-box {
  box-sizing: border-box;
  width: 546px;
  height: 535px;
  padding: 25px 20px 0;
  border: 1px solid #e3dccb;
  border-radius: 2px;
  background: #fcfcf0;
}

.figure-title {
  height: 38px;
  margin-left: -9px;
  font-size: 12px;
  line-height: 16px;
  color: #1b1b1b;
}

.figure {
  font-family: 'Liberation Sans', Arial, sans-serif;
  fill: #151515;
}

.aside {
  width: 240px;
  padding-left: 11px;
}

.aside-title {
  height: 29px;
  font-size: 11.3px;
  font-weight: bold;
  line-height: 13px;
  color: #111;
}

.toc {
  display: flex;
  flex-direction: column;
  justify-content: flex-end;
  height: 365px;
  border-left: 1px solid #d0d3d8;
}

.toc a {
  height: 23px;
  padding-left: 11px;
  font-size: 10.6px;
  line-height: 23px;
  color: #36578f;
}

.scroll-up,
.scroll-down,
.to-top,
.feedback,
.radio {
  position: absolute;
}

.scroll-up {
  top: 5px;
  left: 1012px;
}

.scroll-down {
  top: 539px;
  left: 1012px;
}

.to-top {
  top: 221px;
  left: 975px;
}

.feedback {
  top: 391.5px;
  left: 974px;
}

.radio {
  top: 514px;
  left: 974px;
}

.taskbar {
  display: flex;
  align-items: center;
  box-sizing: border-box;
  height: 35px;
  margin-top: 2px;
  border-top: 1px solid #d0d0cf;
  background: linear-gradient(90deg, #eee1d0, #f0dfca 45%, #ecdfcf);
}

.weather {
  display: flex;
  align-items: center;
  width: 250px;
  padding-left: 13px;
}

.weather > svg {
  margin-top: -6px;
}

.weather-text {
  display: flex;
  flex-direction: column;
  margin: -2px 0 0 3px;
  font-size: 8.5px;
  line-height: 11px;
  color: #222;
}

.muted {
  color: #6d655c;
}

.apps {
  display: flex;
  align-items: center;
}

.search {
  display: flex;
  align-items: center;
  box-sizing: border-box;
  width: 153px;
  height: 21px;
  margin: 0 2.5px 0 10px;
  padding: 0 2px 0 7px;
  border-radius: 11px;
  background: #fbf6f0;
  font-size: 10.3px;
  color: #5c5650;
}

.start {
  margin-left: -0.5px;
}

.search span {
  margin-left: 6px;
}

.doodle {
  margin-left: auto;
}

.app {
  position: relative;
  display: flex;
  justify-content: center;
  width: 31.45px;
}

.app.running::after {
  content: '';
  position: absolute;
  top: 21px;
  width: 5px;
  height: 2px;
  border-radius: 1px;
  background: #85796c;
}

.serif {
  font-family: 'Liberation Serif', serif;
}

.tray {
  display: grid;
  grid-template-columns: 22px 23px 22px 24px 30px 24px 10px 24px 44px 22px;
  align-items: center;
  justify-items: center;
  margin-left: auto;
  padding-right: 9px;
  font-size: 11px;
  color: #222;
}

.clock {
  display: flex;
  flex-direction: column;
  align-items: flex-end;
  justify-self: end;
  font-size: 8.3px;
  line-height: 11.5px;
}

.corner {
  position: absolute;
  box-sizing: border-box;
  width: 85px;
  height: 85px;
  border: 0 solid #35c58c;
}

.tl {
  top: 0;
  left: 0;
  border-width: 4px 0 0 4px;
}

.tr {
  top: 0;
  right: 0;
  border-width: 4px 4px 0 0;
}

.bl {
  bottom: 0;
  left: 0;
  border-width: 0 0 4px 4px;
}

.br {
  right: 0;
  bottom: 0;
  border-width: 0 4px 4px 0;
}

.share-bar {
  position: absolute;
  top: 40px;
  left: 551px;
  display: flex;
  align-items: center;
  box-sizing: border-box;
  width: 178px;
  height: 18px;
  padding: 0 3px 0 5px;
  border-radius: 1px 1px 4px 4px;
  background: #242424;
  font-size: 8.6px;
  color: #eee;
}

.share-bar span {
  margin-left: 2px;
}

.cloud {
  margin: 0 6px 0 11px;
}

.share-bar b {
  margin-left: auto;
  padding: 0 4px;
  border-radius: 2px;
  background: #cf4336;
  font-size: 8px;
  font-weight: normal;
  line-height: 13px;
}

.speaking {
  position: absolute;
  top: 87px;
  left: 958px;
  display: flex;
  align-items: center;
  box-sizing: border-box;
  width: 172px;
  height: 25px;
  padding: 0 2px 0 8px;
  background: #222626;
  font-size: 8.6px;
  color: #ddd;
  white-space: nowrap;
}

.speaking i {
  width: 1px;
  height: 12px;
  margin: 0 5px 0 8px;
  background: #3b3e3e;
}

.speaking span + span {
  margin-left: 6.5px;
  letter-spacing: -0.1px;
}

.wm {
  margin-left: auto;
}

.stage > .board {
  position: absolute;
  top: 123px;
  left: 780px;
  width: 372px;
  height: 211px;
  background: #fff;
  box-shadow: 0 0 2px 1px #a9c8ee;
  clip-path: inset(-4px 0 -4px -4px);
}

.say {
  position: absolute;
  top: 566px;
  left: 137px;
  display: flex;
  align-items: center;
  gap: 4px;
  box-sizing: border-box;
  width: 82px;
  height: 26px;
  padding-left: 5px;
  border-radius: 4px;
  background: rgba(110, 110, 110, 0.9);
  font-size: 9px;
  color: #b8b8b8;
}

.caption {
  position: absolute;
  top: 668px;
  left: 76px;
  background: rgba(0, 0, 0, 0.85);
  font-size: 7px;
  line-height: 10px;
  color: #f2f2f2;
  white-space: nowrap;
}

.cursor {
  position: absolute;
  top: 278px;
  left: 571px;
}
</style>
